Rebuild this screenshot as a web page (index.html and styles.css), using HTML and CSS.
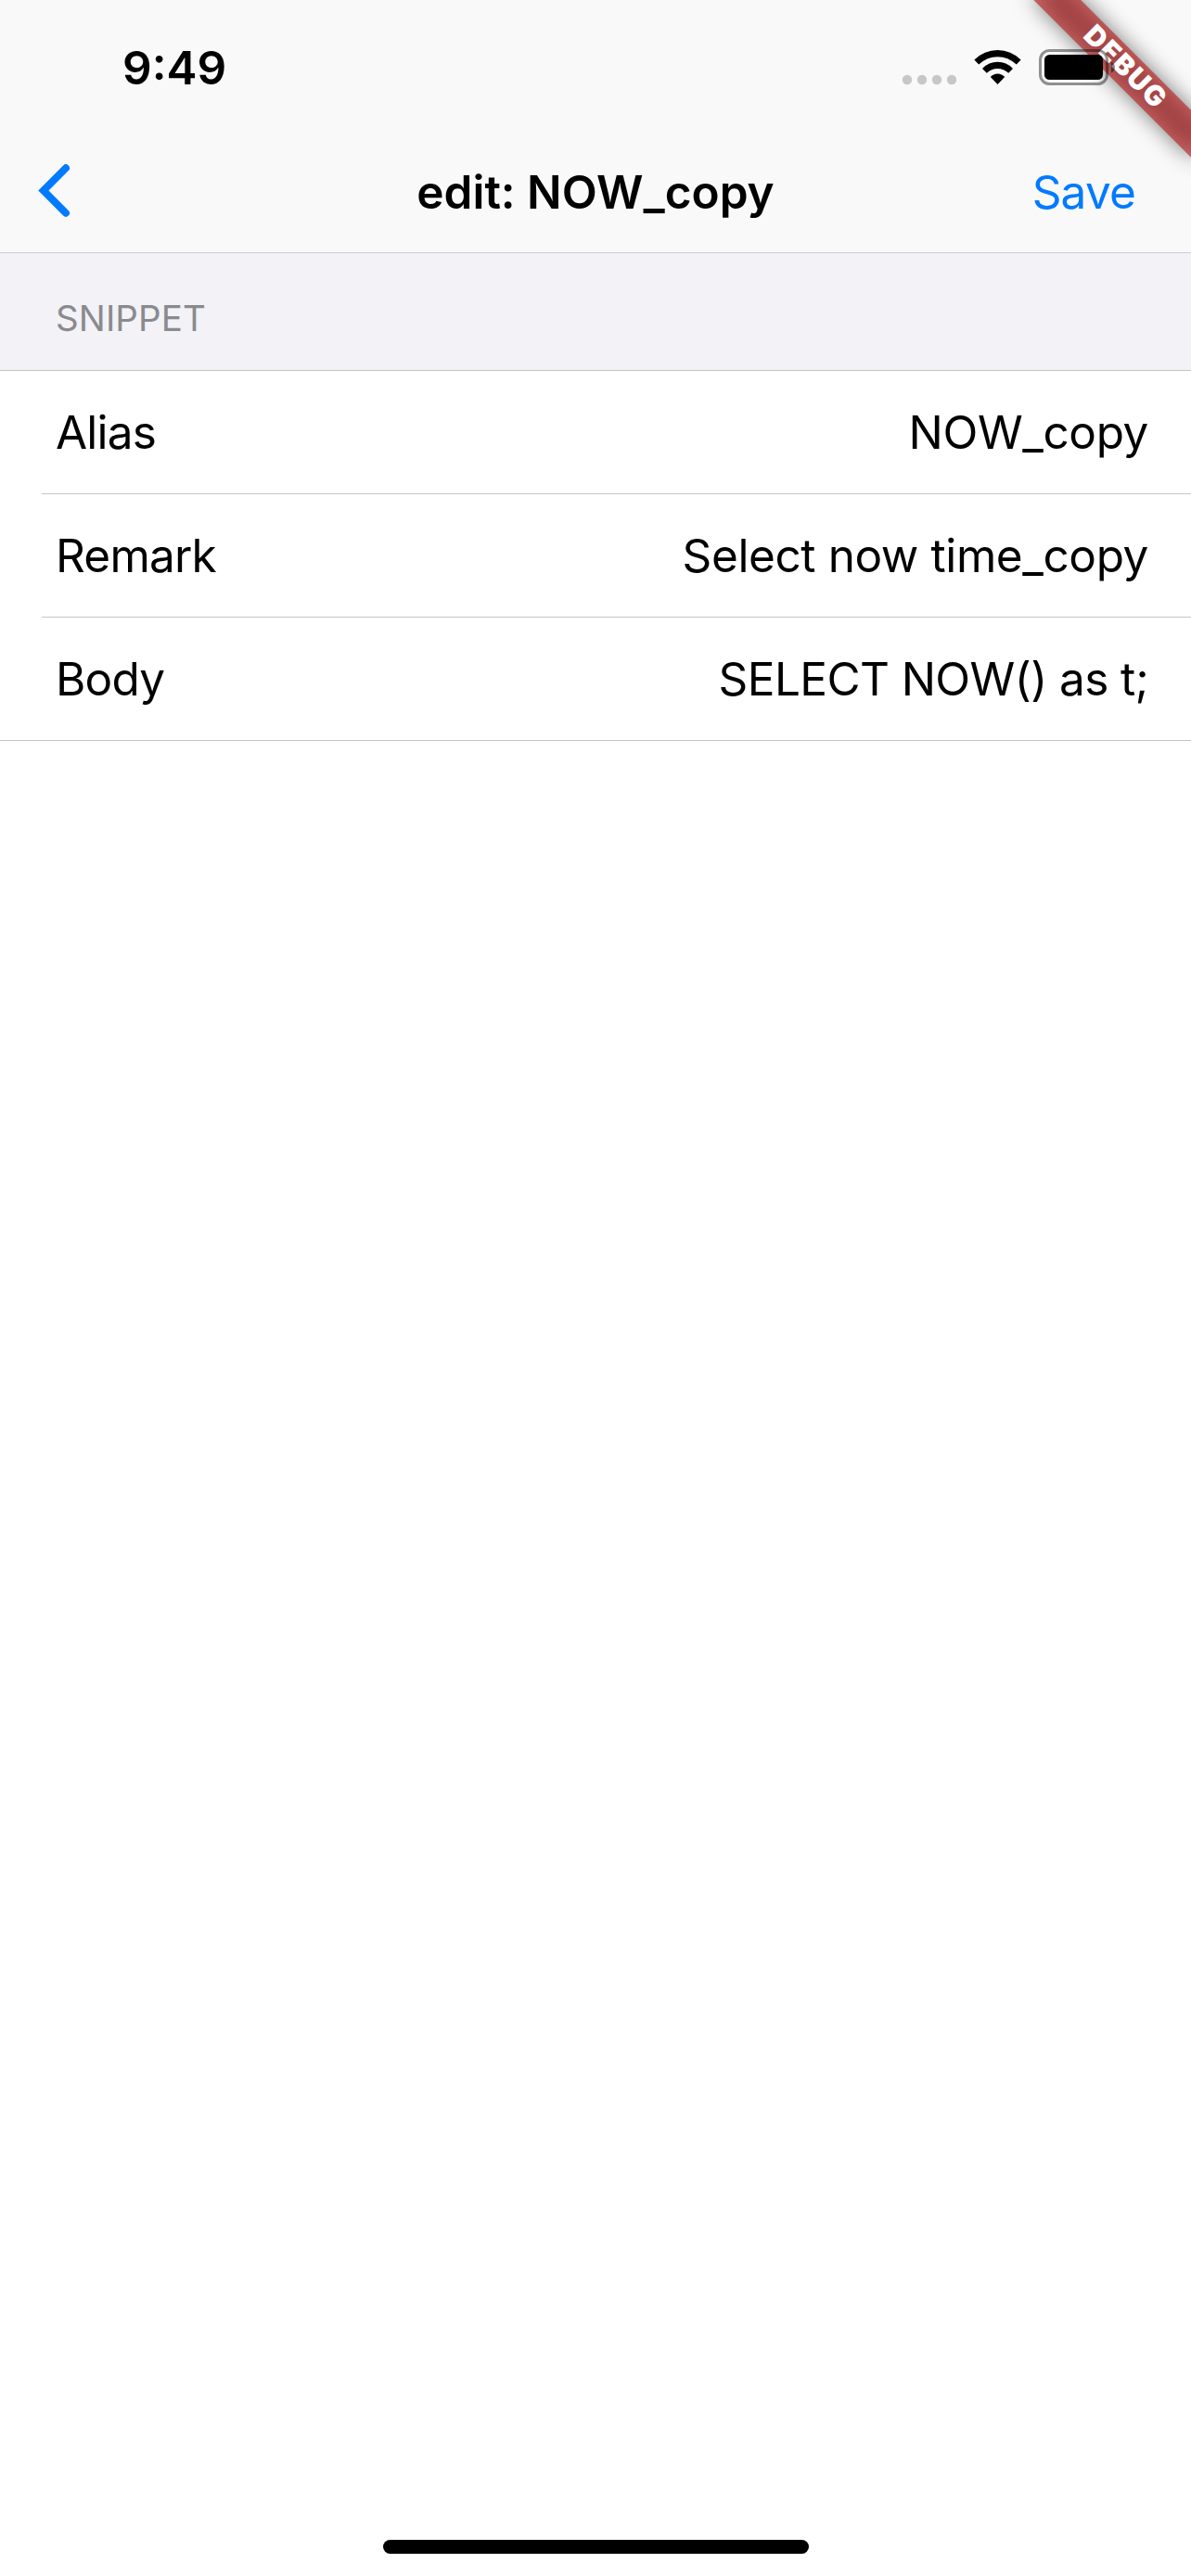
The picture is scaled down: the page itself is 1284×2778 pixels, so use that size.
FILE: index.html
```
<!DOCTYPE html>
<html lang="en">
<head>
  <meta charset="UTF-8">
  <title>edit: NOW_copy</title>
  <link rel="stylesheet" href="styles.css">
</head>
<body>
  <div class="screen">
    <header class="header">
      <svg class="debug-banner" width="240" height="240" viewBox="-240 0 240 240">
        <defs>
          <filter id="shadow" x="-50%" y="-150%" width="200%" height="400%">
            <feGaussianBlur stdDeviation="11.5" />
          </filter>
        </defs>
        <g transform="rotate(45)">
          <rect x="-120" y="84" width="240" height="36" fill="#000" fill-opacity=".5" filter="url(#shadow)" />
          <rect x="-121" y="84" width="242" height="36" fill="#b71c1c" fill-opacity=".627" />
          <text class="debug-text" x="-55" y="111.2" textLength="111">DEBUG</text>
        </g>
      </svg>
      <div class="status-bar">
        <span class="time">9:49</span>
        <svg class="status-icons" width="240" height="50" viewBox="970 48 240 50">
          <g fill="#c7c7c7">
            <circle cx="978" cy="86" r="5.2" />
            <circle cx="994" cy="86" r="5.2" />
            <circle cx="1010" cy="86" r="5.2" />
            <circle cx="1026" cy="86" r="5.2" />
          </g>
          <!-- wifi -->
          <path d="M1050.4 64.6 Q1061 54 1075.5 54 Q1090 54 1100.6 64.6 L1095.8 69.6 Q1087 61.2 1075.5 61.2 Q1064 61.2 1055.2 69.6 Z" />
          <path d="M1059 73.9 Q1066 66.8 1075.5 66.8 Q1085 66.8 1092 73.9 L1087.2 78.7 Q1082.2 74 1075.5 74 Q1068.8 74 1063.8 78.7 Z" />
          <path d="M1067.8 83 Q1071 79.4 1075.5 79.4 Q1080 79.4 1083.2 83 L1075.5 91 Z" />
          <!-- battery -->
          <rect x="1121.5" y="54.5" width="72" height="36" rx="10" fill="none" stroke="#000" stroke-opacity=".42" stroke-width="3" />
          <rect x="1126" y="59" width="63" height="27" rx="5.5" />
          <path d="M1198 66.5 Q1202 68.5 1202 72.5 Q1202 76.5 1198 78.5 Z" fill-opacity=".45" />
        </svg>
      </div>
      <nav class="nav-bar">
        <svg class="back" width="40" height="64" viewBox="36 174.5 40 64">
          <path d="M71 180.8 L46.9 205 L71 229.2" fill="none" stroke="#007aff" stroke-width="8" stroke-linecap="round" />
        </svg>
        <h1 class="title">edit: NOW_copy</h1>
        <a class="save">Save</a>
      </nav>
    </header>

    <main>
      <h2 class="section-title">SNIPPET</h2>
      <div class="rows">
        <div class="row"><span class="label">Alias</span><span class="value">NOW_copy</span></div>
        <div class="row"><span class="label">Remark</span><span class="value">Select now time_copy</span></div>
        <div class="row"><span class="label">Body</span><span class="value body">SELECT NOW() as t;</span></div>
      </div>
    </main>

    <div class="home-indicator"></div>
  </div>
</body>
</html>
```
FILE: styles.css
```
* {
  box-sizing: border-box;
}
body {
  margin: 0;
  background: #fff;
  color: #000;
  font-family: Inter, "Liberation Sans", sans-serif;
  font-size: 49.5px;
}
.screen {
  display: flex;
  flex-direction: column;
  width: 1284px;
  height: 2778px;
  overflow: hidden;
}
.header {
  position: relative;
  height: 273px;
  background: #f9f9f9;
  border-bottom: 1px solid #cfcfd0;
}
.debug-banner {
  position: absolute;
  top: 0;
  right: 0;
}
.debug-text {
  fill: #fff;
  font-size: 30px;
  font-weight: 900;
}

.status-bar {
  position: relative;
  display: flex;
  justify-content: space-between;
  height: 141px;
  padding: 48px 74px 0 132px;
}
.time {
  font-size: 49.5px;
  font-weight: 600;
  line-height: 50px;
}

.nav-bar {
  display: grid;
  grid-template-columns: 300px 1fr 300px;
  align-items: center;
  height: 131px;
  padding: 0 60px;
}
.back {
  margin-left: -24px;
}
.title {
  margin: 0;
  font-size: 49.5px;
  font-weight: 600;
  text-align: center;
  white-space: nowrap;
}
.save {
  color: #007aff;
  text-align: right;
  letter-spacing: -0.8px;
}

.section-title {
  height: 126px;
  margin: 0;
  padding: 46px 60px 0;
  background: #f2f2f7;
  color: #8a8a8e;
  font-size: 38.5px;
  font-weight: 400;
  line-height: 48px;
  letter-spacing: 0.1px;
}
.rows {
  border-top: 1px solid #c6c6c8;
  border-bottom: 1px solid #c6c6c8;
}
.row {
  display: flex;
  justify-content: space-between;
  align-items: center;
  height: 132px;
  padding: 0 46px 0 15px;
  margin-left: 45px;
}
.row + .row {
  height: 133px;
  border-top: 1px solid #c6c6c8;
}
.label {
  letter-spacing: -0.8px;
}
.value {
  letter-spacing: -0.4px;
}
.body {
  letter-spacing: -0.6px;
}

.home-indicator {
  width: 459px;
  height: 15px;
  margin: auto auto 24px;
  border-radius: 8px;
  background: #000;
}
```
